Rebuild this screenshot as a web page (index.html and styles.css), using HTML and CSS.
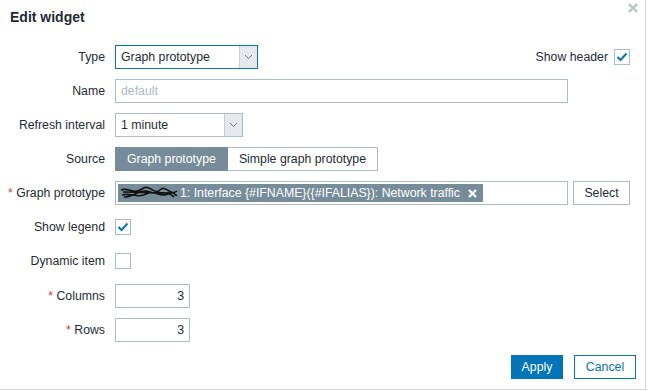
FILE: index.html
```html
<!DOCTYPE html>
<html lang="en">
<head>
  <meta charset="UTF-8" />
  <title>Edit widget</title>
  <link rel="stylesheet" href="styles.css">
</head>
<body>
  <div class="dialog">
    <div class="head">
      <h4>Edit widget</h4>
      <span class="close">
        <svg width="10" height="10" viewBox="0 0 10 10"><path d="M1 1L9 9M9 1L1 9" stroke="#b8c3c9" stroke-width="2.4"/></svg>
      </span>
    </div>

    <div class="form">
      <label>Type</label>
      <div class="field split">
        <div class="select focus w143">
          <span>Graph prototype</span>
          <i class="arrow"><svg width="9" height="6" viewBox="0 0 9 6"><path d="M1 1L4.5 4.5L8 1" fill="none" stroke="#6b7b84" stroke-width="1"/></svg></i>
        </div>
        <div class="side">
          <span>Show header</span>
          <span class="check on"><svg width="12" height="10" viewBox="0 0 12 10"><path d="M1.5 5L4.5 8L10.5 1.5" fill="none" stroke="#0275b8" stroke-width="2"/></svg></span>
        </div>
      </div>

      <label>Name</label>
      <div class="field"><div class="input wide placeholder">default</div></div>

      <label>Refresh interval</label>
      <div class="field">
        <div class="select w128">
          <span>1 minute</span>
          <i class="arrow"><svg width="9" height="6" viewBox="0 0 9 6"><path d="M1 1L4.5 4.5L8 1" fill="none" stroke="#6b7b84" stroke-width="1"/></svg></i>
        </div>
      </div>

      <label>Source</label>
      <div class="field">
        <div class="segments">
          <span class="seg active">Graph prototype</span>
          <span class="seg">Simple graph prototype</span>
        </div>
      </div>

      <label><em>*</em> Graph prototype</label>
      <div class="field">
        <div class="multi">
          <span class="chip">
            <svg class="blot" width="58" height="14" viewBox="0 0 58 14"><path d="M1 4C8 1 14 9 22 3S34 10 40 4S50 11 57 5M2 9C10 6 18 13 26 8S40 12 48 8S54 11 57 9M3 6L55 7M4 11C12 12 20 2 30 6S46 3 54 11" fill="none" stroke="#111" stroke-width="1.6"/></svg>1: Interface {#IFNAME}({#IFALIAS}): Network traffic
            <svg class="x" width="9" height="9" viewBox="0 0 9 9"><path d="M1 1L8 8M8 1L1 8" stroke="#fff" stroke-width="2.3"/></svg>
          </span>
        </div>
        <button class="btn pick">Select</button>
      </div>

      <label>Show legend</label>
      <div class="field">
        <span class="check on"><svg width="12" height="10" viewBox="0 0 12 10"><path d="M1.5 5L4.5 8L10.5 1.5" fill="none" stroke="#0275b8" stroke-width="2"/></svg></span>
      </div>

      <label>Dynamic item</label>
      <div class="field"><span class="check"></span></div>

      <label class="gap"><em>*</em> Columns</label>
      <div class="field gap"><div class="input num">3</div></div>

      <label><em>*</em> Rows</label>
      <div class="field"><div class="input num">3</div></div>
    </div>

    <div class="footer">
      <button class="btn primary">Apply</button>
      <button class="btn outline">Cancel</button>
    </div>
  </div>
</body>
</html>
```

FILE: styles.css
```css
body {
  margin: 0;
  background: #fff;
  font-family: "Liberation Sans", Arial, sans-serif;
  font-size: 12.3px;
  color: #1f2c33;
}
.dialog {
  position: relative;
  width: 645px;
  height: 389px;
  border-right: 1px solid #cfd7db;
  border-bottom: 1px solid #cfd7db;
  display: flex;
  flex-direction: column;
}
.head {
  height: 45px;
  padding: 0 10px;
  box-sizing: border-box;
}
.head h4 {
  margin: 0;
  padding-top: 9px;
  font-size: 14px;
  font-weight: bold;
  color: #1f2c33;
}
.close {
  position: absolute;
  top: 2px;
  right: 7px;
}
.form {
  display: grid;
  grid-template-columns: 105px 1fr;
  column-gap: 10px;
  row-gap: 10px;
  padding-right: 17px;
}
.form label {
  height: 24px;
  line-height: 24px;
  text-align: right;
  white-space: nowrap;
}
.form em {
  font-style: normal;
  color: #e33734;
}
.form .gap {
  margin-top: 1px;
}
.field {
  display: flex;
  align-items: center;
  height: 24px;
}
.split {
  justify-content: space-between;
}
.side {
  display: flex;
  align-items: center;
  gap: 6px;
}
.select {
  height: 24px;
  box-sizing: border-box;
  border: 1px solid #acbbc2;
  display: flex;
  align-items: center;
  justify-content: space-between;
  padding-left: 5px;
  background: #fff;
}
.select.focus {
  border-color: #0275b8;
}
.w143 { width: 143px; }
.w128 { width: 128px; }
.arrow {
  width: 17px;
  height: 22px;
  background: #e5e9eb;
  border-left: 1px solid #c5cfd4;
  display: flex;
  align-items: center;
  justify-content: center;
}
.input {
  height: 24px;
  box-sizing: border-box;
  border: 1px solid #acbbc2;
  line-height: 22px;
  padding: 0 5px;
}
.input.wide { width: 453px; }
.input.placeholder { color: #acbbc2; }
.input.num {
  width: 75px;
  text-align: right;
}
.segments {
  display: flex;
  height: 24px;
}
.seg {
  line-height: 22px;
  padding: 0 11px;
  border: 1px solid #acbbc2;
  background: #fff;
}
.seg.active {
  background: #768d99;
  border-color: #768d99;
  color: #fff;
}
.seg + .seg {
  border-left: none;
}
.multi {
  width: 453px;
  height: 24px;
  box-sizing: border-box;
  border: 1px solid #acbbc2;
  padding: 2px;
  display: flex;
}
.chip {
  background: #768d99;
  color: #fff;
  height: 18px;
  line-height: 18px;
  padding: 0 6px 0 2px;
  display: flex;
  align-items: center;
  white-space: nowrap;
}
.chip .blot {
  margin-right: 2px;
}
.chip .x {
  margin-left: 8px;
}
.btn {
  font-family: inherit;
  font-size: 12.3px;
  height: 24px;
  box-sizing: border-box;
  border: 1px solid #acbbc2;
  background: #fff;
  color: #1f2c33;
  padding: 0 12px;
  margin-left: 5px;
}
.btn.pick {
  width: 57px;
  padding: 0;
}
.check {
  width: 16px;
  height: 16px;
  box-sizing: border-box;
  border: 1px solid #acbbc2;
  display: flex;
  align-items: center;
  justify-content: center;
}
.footer {
  margin-top: auto;
  display: flex;
  justify-content: flex-end;
  padding: 0 9px 10px 0;
}
.footer .btn {
  margin-left: 11px;
}
.btn.primary {
  background: #0275b8;
  border-color: #0275b8;
  color: #fff;
  width: 52px;
  padding: 0;
}
.btn.outline {
  border-color: #0275b8;
  color: #0275b8;
  width: 62px;
  padding: 0;
}
```
